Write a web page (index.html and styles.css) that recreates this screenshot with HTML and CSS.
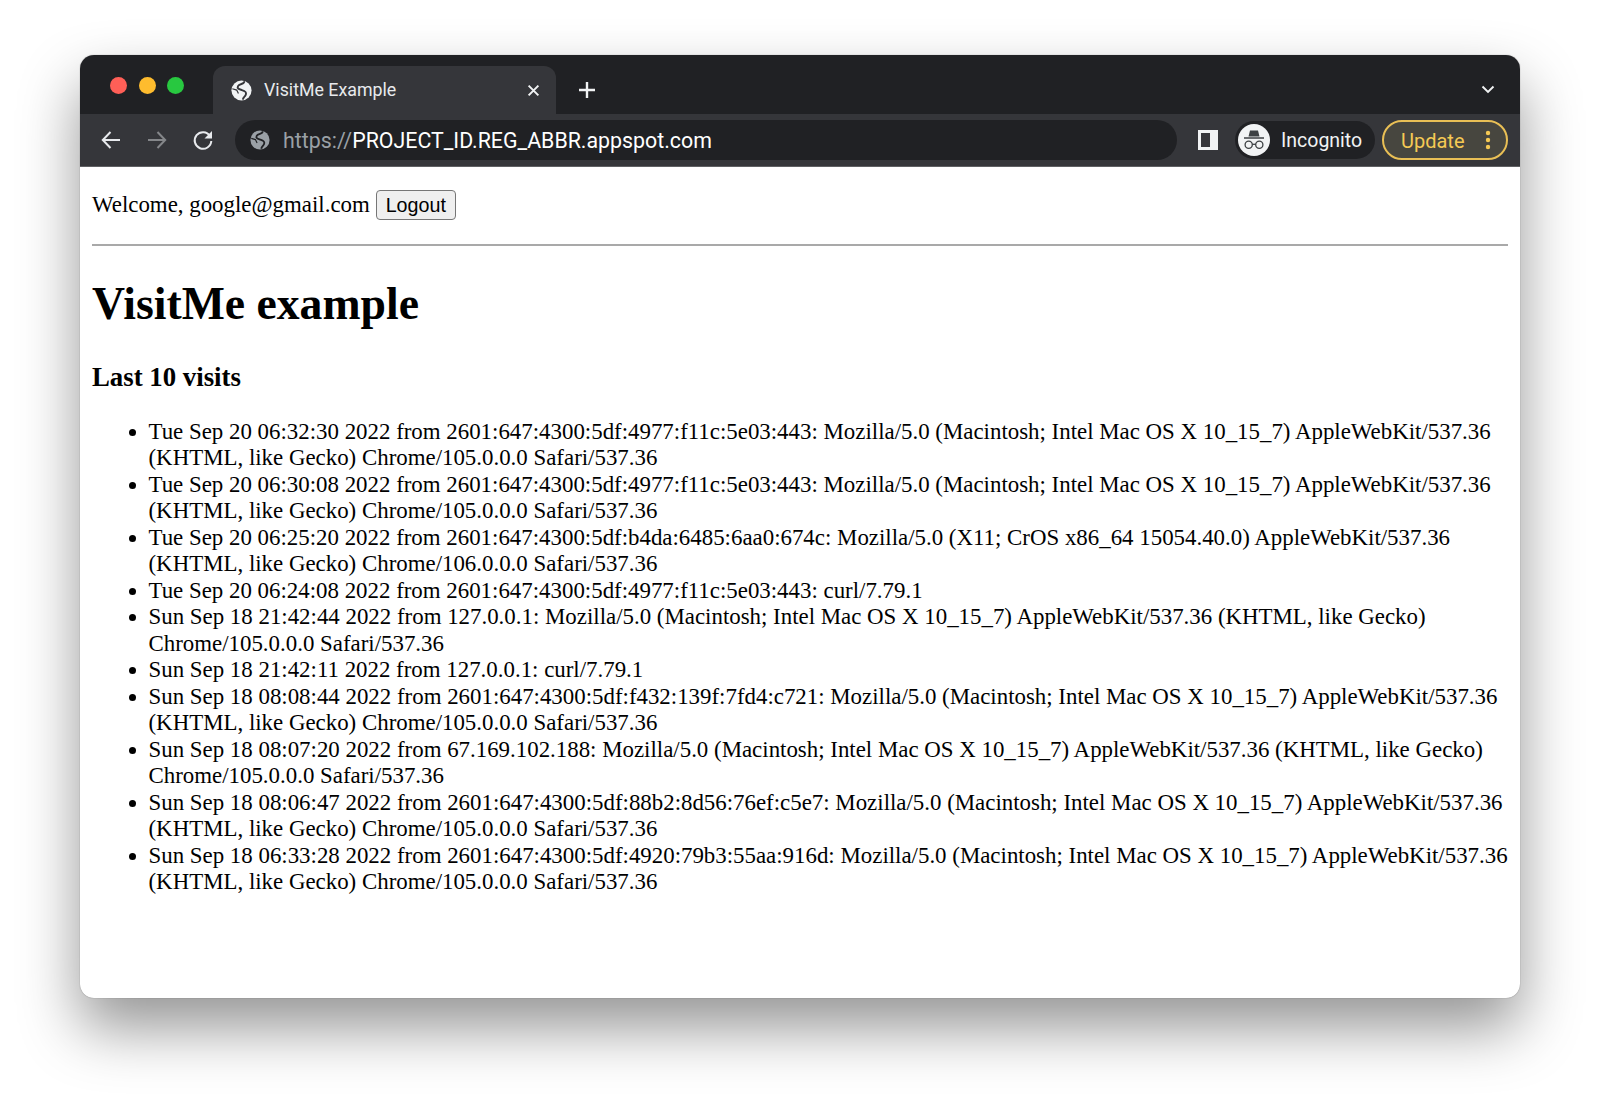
FILE: index.html
```html
<!DOCTYPE html>
<html lang="en">
<head>
<meta charset="utf-8">
<title>VisitMe Example</title>
<link rel="stylesheet" href="styles.css">
</head>
<body>
<div class="window">
  <div class="tabstrip">
    <div class="lights">
      <span class="light red"></span><span class="light yellow"></span><span class="light green"></span>
    </div>
    <div class="tab">
      <svg class="globe" viewBox="0 0 24 24"><circle cx="12" cy="12" r="11.500" fill="#f1f3f4"/><path d="M15 1.500c1 3.500-5.500 2.500-7 5.500s1.500 3.500 4.500 4.500 5.500 2 4.500 5-3 3-3.500 6" stroke="#35363a" stroke-width="2.200" fill="none"/><path d="M1.500 10l5 1.500 2 4" stroke="#35363a" stroke-width="1.400" fill="none"/></svg>
      <span class="tab-title">VisitMe Example</span>
      <svg class="tab-close" viewBox="0 0 12 12"><path d="M1.500 1.500l9 9M10.500 1.500l-9 9" stroke="#f1f3f4" stroke-width="1.800" fill="none"/></svg>
    </div>
    <svg class="newtab" viewBox="0 0 18 18"><path d="M9 1v16M1 9h16" stroke="#f1f3f4" stroke-width="2.400" fill="none"/></svg>
    <svg class="tabmenu" viewBox="0 0 14 9"><path d="M1.500 1.500L7 7l5.500-5.500" stroke="#f1f3f4" stroke-width="1.900" fill="none"/></svg>
  </div>
  <div class="toolbar">
    <svg class="nav" viewBox="0 0 22 22"><path d="M20 11H3M10.500 3L2.800 11l7.700 8" stroke="#e8eaed" stroke-width="2" fill="none"/></svg>
    <svg class="nav" viewBox="0 0 22 22"><path d="M2 11h17M11.500 3l7.700 8-7.700 8" stroke="#85878a" stroke-width="2" fill="none"/></svg>
    <svg class="nav" viewBox="0 0 22 22"><path d="M18 7A8.300 8.300 0 1 0 19.300 12" stroke="#e8eaed" stroke-width="2" fill="none"/><path d="M20 2v7.500h-7.500z" fill="#e8eaed"/></svg>
    <div class="omnibox">
      <svg class="url-globe" viewBox="0 0 24 24"><circle cx="12" cy="12" r="11.500" fill="#9aa0a6"/><path d="M15 1.500c1 3.500-5.500 2.500-7 5.500s1.500 3.500 4.500 4.500 5.500 2 4.500 5-3 3-3.500 6" stroke="#202124" stroke-width="2.200" fill="none"/><path d="M1.500 10l5 1.500 2 4" stroke="#202124" stroke-width="1.400" fill="none"/></svg>
      <span class="url"><span class="url-scheme">https://</span>PROJECT_ID.REG_ABBR.appspot.com</span>
    </div>
    <svg class="sidepanel" viewBox="0 0 20 20"><path fill-rule="evenodd" fill="#f1f3f4" d="M0 0h20v20H0zM3 3v14h9V3z"/></svg>
    <div class="profile">
      <svg class="avatar" viewBox="0 0 32 32"><circle cx="16" cy="16" r="16" fill="#f1f3f4"/><path fill="#3c4043" d="M12 6.500h8l1.500 6h-11zM6 13.300h20v1.500H6z"/><circle cx="10.700" cy="20.800" r="3.600" fill="none" stroke="#3c4043" stroke-width="1.300"/><circle cx="21.300" cy="20.800" r="3.600" fill="none" stroke="#3c4043" stroke-width="1.300"/><path d="M14.300 20.300h3.400" stroke="#3c4043" stroke-width="1.300"/></svg>
      <span class="profile-name">Incognito</span>
    </div>
    <div class="update">
      <span class="update-label">Update</span>
      <svg class="update-dots" viewBox="0 0 6 20"><circle cx="3" cy="3" r="2.200"/><circle cx="3" cy="10" r="2.200"/><circle cx="3" cy="17" r="2.200"/></svg>
    </div>
  </div>
  <main class="page">
    <div class="welcome"><span>Welcome, google@gmail.com</span><button class="logout">Logout</button></div>
    <hr class="rule">
    <h1 class="title">VisitMe example</h1>
    <h3 class="subtitle">Last 10 visits</h3>
    <ul class="visits">
      <li>Tue Sep 20 06:32:30 2022 from 2601:647:4300:5df:4977:f11c:5e03:443: Mozilla/5.0 (Macintosh; Intel Mac OS X 10_15_7) AppleWebKit/537.36 (KHTML, like Gecko) Chrome/105.0.0.0 Safari/537.36</li>
      <li>Tue Sep 20 06:30:08 2022 from 2601:647:4300:5df:4977:f11c:5e03:443: Mozilla/5.0 (Macintosh; Intel Mac OS X 10_15_7) AppleWebKit/537.36 (KHTML, like Gecko) Chrome/105.0.0.0 Safari/537.36</li>
      <li>Tue Sep 20 06:25:20 2022 from 2601:647:4300:5df:b4da:6485:6aa0:674c: Mozilla/5.0 (X11; CrOS x86_64 15054.40.0) AppleWebKit/537.36 (KHTML, like Gecko) Chrome/106.0.0.0 Safari/537.36</li>
      <li>Tue Sep 20 06:24:08 2022 from 2601:647:4300:5df:4977:f11c:5e03:443: curl/7.79.1</li>
      <li>Sun Sep 18 21:42:44 2022 from 127.0.0.1: Mozilla/5.0 (Macintosh; Intel Mac OS X 10_15_7) AppleWebKit/537.36 (KHTML, like Gecko) Chrome/105.0.0.0 Safari/537.36</li>
      <li>Sun Sep 18 21:42:11 2022 from 127.0.0.1: curl/7.79.1</li>
      <li>Sun Sep 18 08:08:44 2022 from 2601:647:4300:5df:f432:139f:7fd4:c721: Mozilla/5.0 (Macintosh; Intel Mac OS X 10_15_7) AppleWebKit/537.36 (KHTML, like Gecko) Chrome/105.0.0.0 Safari/537.36</li>
      <li>Sun Sep 18 08:07:20 2022 from 67.169.102.188: Mozilla/5.0 (Macintosh; Intel Mac OS X 10_15_7) AppleWebKit/537.36 (KHTML, like Gecko) Chrome/105.0.0.0 Safari/537.36</li>
      <li>Sun Sep 18 08:06:47 2022 from 2601:647:4300:5df:88b2:8d56:76ef:c5e7: Mozilla/5.0 (Macintosh; Intel Mac OS X 10_15_7) AppleWebKit/537.36 (KHTML, like Gecko) Chrome/105.0.0.0 Safari/537.36</li>
      <li>Sun Sep 18 06:33:28 2022 from 2601:647:4300:5df:4920:79b3:55aa:916d: Mozilla/5.0 (Macintosh; Intel Mac OS X 10_15_7) AppleWebKit/537.36 (KHTML, like Gecko) Chrome/105.0.0.0 Safari/537.36</li>
    </ul>
  </main>
</div>
</body>
</html>
```
FILE: styles.css
```css
html, body { margin: 0; padding: 0; background: #fff; height: 1104px; overflow: hidden; }
body { padding-top: 55px; box-sizing: border-box; }

.window {
  width: 1440px; height: 943px; margin-left: 80px;
  background: #fff; border-radius: 14px;
  display: flex; flex-direction: column;
  font-family: "Liberation Sans", Arial, sans-serif;
  box-shadow: 0 0 1px rgba(0,0,0,.5), 0 30px 60px rgba(0,0,0,.42);
}

.tabstrip {
  height: 59px; background: #202124; border-radius: 14px 14px 0 0;
  display: flex; align-items: flex-end; flex: none; box-sizing: border-box;
}
.lights { display: flex; gap: 11.500px; padding: 0 0 20px 30px; width: 133px; box-sizing: border-box; flex: none; }
.light { width: 17px; height: 17px; border-radius: 50%; flex: none; }
.red { background: #ff5f57; }
.yellow { background: #febc2e; }
.green { background: #28c840; }

.tab {
  width: 343px; height: 48px; background: #35363a; border-radius: 12px 12px 0 0;
  display: flex; align-items: center; padding: 0 16px 0 18px; box-sizing: border-box; flex: none;
}
.globe { width: 21px; height: 21px; flex: none; }
.tab-title { color: #e8eaed; font: 17.800px/22px Roboto, sans-serif; margin: 0 0 0 12px; flex: 1; }
.tab-close { width: 13px; height: 13px; flex: none; }
.newtab { width: 18px; height: 18px; margin: 0 0 15px 22px; flex: none; }
.tabmenu { width: 14px; height: 9px; margin: 0 25px 20px auto; flex: none; }

.toolbar {
  height: 53px; background: #35363a; border-bottom: 1px solid #5f6063; box-sizing: border-box;
  display: flex; align-items: center; padding: 0 12px 0 20px; flex: none;
}
.nav { width: 22px; height: 22px; margin-right: 24px; flex: none; }
.nav:nth-of-type(3) { margin-right: 21px; }
.omnibox {
  width: 942px; height: 40px; background: #202124; border-radius: 20px;
  display: flex; align-items: center; padding-left: 15px; box-sizing: border-box; flex: none;
}
.url-globe { width: 20px; height: 20px; flex: none; }
.url { color: #fff; font: 21.350px/26px Roboto, sans-serif; margin: 2px 0 0 13px; white-space: nowrap; }
.url-scheme { color: #9aa0a6; }
.sidepanel { width: 20px; height: 20px; margin-left: 21px; flex: none; }
.profile {
  width: 140px; height: 38px; background: #202124; border-radius: 19px; margin-left: 17px;
  display: flex; align-items: center; padding-left: 3px; box-sizing: border-box; flex: none;
}
.avatar { width: 32px; height: 32px; flex: none; }
.profile-name { color: #f1f3f4; font: 19.500px/24px Roboto, sans-serif; margin: 2px 0 0 11px; }
.update {
  width: 126px; height: 40px; background: #47463f; border: 2px solid #e9bf55; border-radius: 20px;
  margin-left: 7px; display: flex; align-items: center; padding-left: 17px; box-sizing: border-box; flex: none;
}
.update-label { color: #f5c954; font: 400 20px/24px Roboto, sans-serif; margin-top: 2px; }
.update-dots { width: 6px; height: 20px; fill: #f5c954; margin-left: auto; margin-right: 15px; flex: none; }

.page {
  flex: 1; padding: 22px 12px 0 12px; color: #000;
  font: 22.880px/26.470px "Liberation Serif", "Times New Roman", serif;
}
.welcome { height: 32px; display: flex; align-items: center; gap: 6px; white-space: pre; }
.logout {
  width: 80px; height: 30px; padding: 0; font: 19.700px "Liberation Sans", Arial, sans-serif; color: #000;
  background: #efefef; border: 1px solid #767676; border-radius: 4px;
}
.rule { height: 0; margin: 23px 0 0; border: 0; border-top: 2px solid #a9a9a9; }
.title { font-size: 45.700px; line-height: 53px; font-weight: 700; margin: 31px 0 0; }
.subtitle { font-size: 26.800px; line-height: 31px; font-weight: 700; margin: 32px 0 0; }
.visits { margin: 26px -4px 0 0; padding: 0 0 0 56.500px; }
```
